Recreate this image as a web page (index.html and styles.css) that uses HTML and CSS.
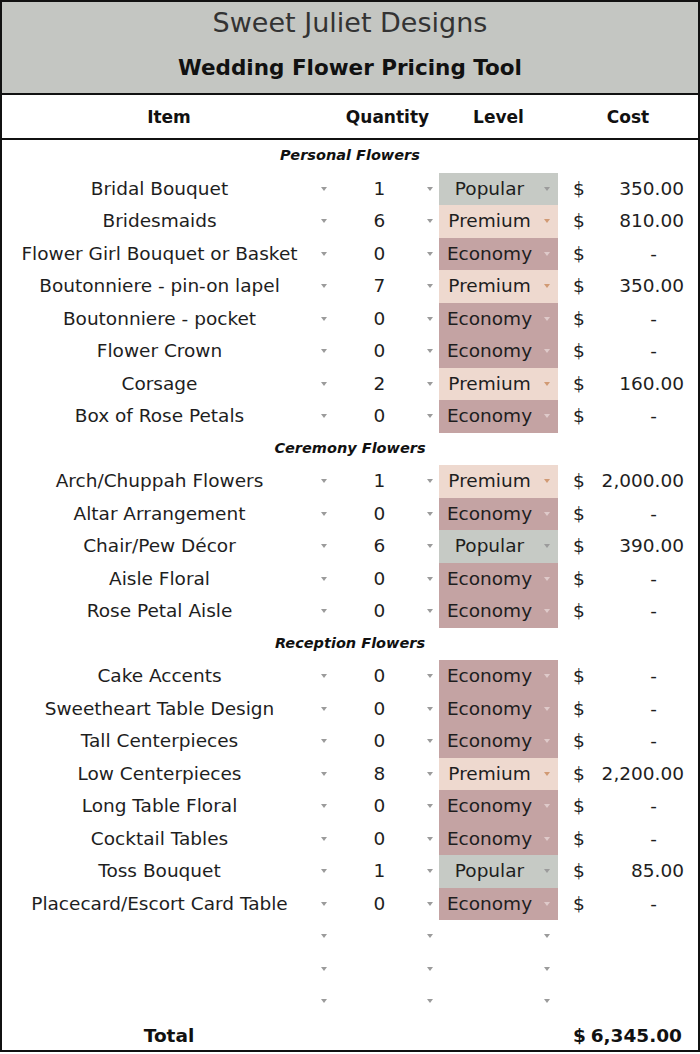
FILE: index.html
```html
<!DOCTYPE html>
<html>
<head>
<meta charset="utf-8">
<link rel="stylesheet" href="styles.css">
</head>
<body>
<div class="sheet">
  <div class="banner">
    <div class="brand">Sweet Juliet Designs</div>
    <div class="tool">Wedding Flower Pricing Tool</div>
  </div>
  <div class="row colhead">
    <div class="hc">Item</div>
    <div class="hc">Quantity</div>
    <div class="hc">Level</div>
    <div class="hc">Cost</div>
  </div>
  <div class="body" id="body"></div>
</div>
<script src="app.js"></script>
</body>
</html>
```
FILE: app.js
```js
const data = [
  ["Personal Flowers"],
  ["Bridal Bouquet", 1, "Popular", "350.00"],
  ["Bridesmaids", 6, "Premium", "810.00"],
  ["Flower Girl Bouquet or Basket", 0, "Economy", null],
  ["Boutonniere - pin-on lapel", 7, "Premium", "350.00"],
  ["Boutonniere - pocket", 0, "Economy", null],
  ["Flower Crown", 0, "Economy", null],
  ["Corsage", 2, "Premium", "160.00"],
  ["Box of Rose Petals", 0, "Economy", null],
  ["Ceremony Flowers"],
  ["Arch/Chuppah Flowers", 1, "Premium", "2,000.00"],
  ["Altar Arrangement", 0, "Economy", null],
  ["Chair/Pew Décor", 6, "Popular", "390.00"],
  ["Aisle Floral", 0, "Economy", null],
  ["Rose Petal Aisle", 0, "Economy", null],
  ["Reception Flowers"],
  ["Cake Accents", 0, "Economy", null],
  ["Sweetheart Table Design", 0, "Economy", null],
  ["Tall Centerpieces", 0, "Economy", null],
  ["Low Centerpieces", 8, "Premium", "2,200.00"],
  ["Long Table Floral", 0, "Economy", null],
  ["Cocktail Tables", 0, "Economy", null],
  ["Toss Bouquet", 1, "Popular", "85.00"],
  ["Placecard/Escort Card Table", 0, "Economy", null],
  [""], [""], [""]
];
const body = document.getElementById("body");
const arrow = () => `<span class="arr"></span>`;
for (const r of data) {
  const row = document.createElement("div");
  if (r.length === 1 && r[0]) {
    row.className = "section";
    row.textContent = r[0];
  } else if (r.length === 1) {
    row.className = "row data";
    row.innerHTML =
      `<div class="c item"><span class="t"></span>${arrow()}</div>` +
      `<div class="c qty"><span class="t"></span>${arrow()}</div>` +
      `<div class="c level"><span class="t"></span>${arrow()}</div>` +
      `<div class="c cost"></div>`;
  } else {
    const [name, q, lvl, cost] = r;
    row.className = "row data";
    row.innerHTML =
      `<div class="c item"><span class="t">${name}</span>${arrow()}</div>` +
      `<div class="c qty"><span class="t">${q}</span>${arrow()}</div>` +
      `<div class="c level ${lvl.toLowerCase()}"><span class="t">${lvl}</span>${arrow()}</div>` +
      `<div class="c cost"><span class="cur">$</span>` +
      (cost ? `<span class="amt">${cost}</span>` : `<span class="dash">-</span>`) +
      `</div>`;
  }
  body.appendChild(row);
}
const tot = document.createElement("div");
tot.className = "row total";
tot.innerHTML = `<div class="c tl">Total</div><div class="c"></div><div class="c"></div>` +
  `<div class="c cost"><span class="cur">$</span><span class="amt">6,345.00</span></div>`;
body.appendChild(tot);
```
FILE: styles.css
```css
html, body {
  margin: 0;
  padding: 0;
  background: #ffffff;
}
body {
  font-family: "DejaVu Sans", "Open Sans", sans-serif;
  color: #1f1f1f;
}
.sheet {
  width: 700px;
  height: 1052px;
  box-sizing: border-box;
  border: 2px solid #111;
  overflow: hidden;
}
.banner {
  height: 91px;
  background: #c4c6c2;
  border-bottom: 2px solid #111;
  display: flex;
  flex-direction: column;
  align-items: center;
}
.brand {
  font-size: 27px;
  color: #333;
  margin-top: 3px;
  line-height: 36px;
}
.tool {
  font-size: 21.5px;
  font-weight: 700;
  color: #111;
  margin-top: 12px;
  line-height: 30px;
}
.row {
  display: grid;
  grid-template-columns: 334px 103px 119px 140px;
}
.colhead {
  height: 43px;
  border-bottom: 2px solid #111;
  align-items: center;
}
.hc {
  text-align: center;
  font-weight: 700;
  font-size: 17px;
  color: #111;
}
.section {
  height: 32.5px;
  box-sizing: border-box;
  padding-top: 5px;
  text-align: center;
  font-weight: 700;
  font-style: italic;
  font-size: 14.5px;
  color: #111;
  line-height: 21px;
}
.data {
  height: 32.5px;
}
.c {
  display: flex;
  align-items: center;
  font-size: 18.5px;
  line-height: 24px;
  color: #1e1e1e;
}
.c .t {
  flex: 1;
  text-align: center;
  white-space: nowrap;
}
.arr {
  width: 0;
  height: 0;
  border-left: 3.5px solid transparent;
  border-right: 3.5px solid transparent;
  border-top: 4px solid #9b9b9b;
  flex: none;
}
.item .arr { margin: 0 9px 0 4px; }
.qty .arr { margin: 0 6px 0 4px; }
.level .arr { margin: 0 8px 0 4px; }
.popular { background: #c6cac5; }
.premium { background: #eed9cf; }
.premium .arr { border-top-color: #d19a74; }
.economy { background: #c4a3a3; }
.economy .arr { border-top-color: #dfcaca; }
.cost {
  padding: 0 14px 0 15px;
}
.cur { flex: 1; }
.dash { margin-right: 27px; }
.total {
  height: 32.5px;
}
.total .c {
  font-weight: 700;
  font-size: 18.5px;
  color: #111;
  padding-top: 5px;
}
.total .cost {
  padding-right: 16px;
}
.tl {
  justify-content: center;
}
```
